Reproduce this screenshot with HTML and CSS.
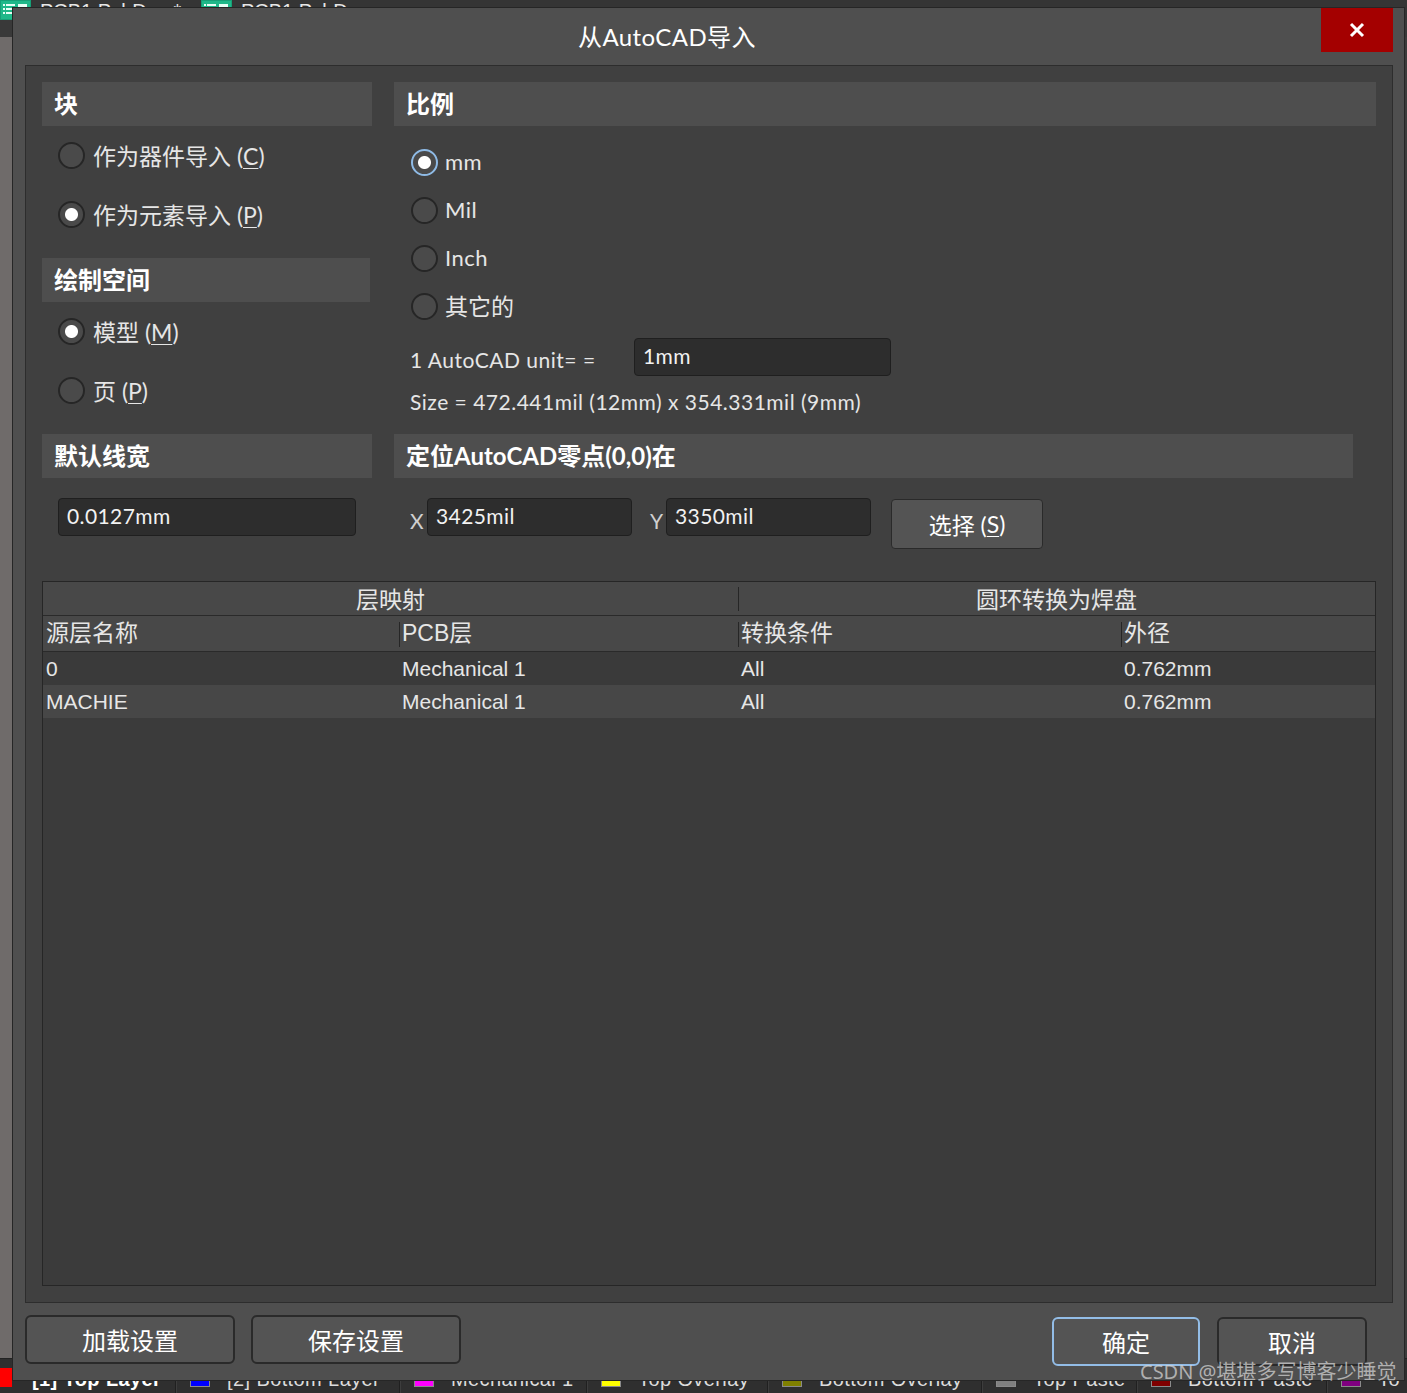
FILE: index.html
```html
<!DOCTYPE html>
<html lang="zh-CN">
<head>
<meta charset="utf-8">
<title>从AutoCAD导入</title>
<link rel="stylesheet" href="styles.css">
</head>
<body>
<div class="app">
  <div class="doc-tabs">
    <div class="doc-tab">
      <svg class="doc-icon" viewBox="0 0 31 20" width="31" height="20"><rect x="0" y="0" width="31" height="20" fill="#16a077"/><rect x="1" y="1" width="29" height="18" fill="#1fb889"/><g fill="#e8fff6"><rect x="3" y="4" width="2" height="2"/><rect x="6" y="4" width="9" height="2"/><rect x="3" y="8" width="2" height="2"/><rect x="6" y="8" width="9" height="2"/><rect x="3" y="12" width="2" height="2"/><rect x="6" y="12" width="9" height="2"/><rect x="18" y="4" width="9" height="10"/></g></svg>
      <span class="doc-name">PCB1.PcbDoc *</span>
    </div>
    <div class="doc-tab">
      <svg class="doc-icon" viewBox="0 0 31 20" width="31" height="20"><rect x="0" y="0" width="31" height="20" fill="#16a077"/><rect x="1" y="1" width="29" height="18" fill="#1fb889"/><g fill="#e8fff6"><rect x="3" y="4" width="2" height="2"/><rect x="6" y="4" width="9" height="2"/><rect x="3" y="8" width="2" height="2"/><rect x="6" y="8" width="9" height="2"/><rect x="3" y="12" width="2" height="2"/><rect x="6" y="12" width="9" height="2"/><rect x="18" y="4" width="9" height="10"/></g></svg>
      <span class="doc-name">PCB1.PcbDoc</span>
    </div>
  </div>
  <div class="toolbar"></div>
  <div class="workspace">
    <div class="side-strip"></div>
    <div class="canvas"></div>
  </div>
  <div class="layer-tabs">
    <div class="layer-tab active"><span class="swatch sw-red"></span><span class="layer-name">[1] Top Layer</span></div>
    <div class="layer-tab"><span class="swatch sw-blue"></span><span class="layer-name">[2] Bottom Layer</span></div>
    <div class="layer-tab"><span class="swatch sw-magenta"></span><span class="layer-name">Mechanical 1</span></div>
    <div class="layer-tab"><span class="swatch sw-yellow"></span><span class="layer-name">Top Overlay</span></div>
    <div class="layer-tab"><span class="swatch sw-olive"></span><span class="layer-name">Bottom Overlay</span></div>
    <div class="layer-tab"><span class="swatch sw-gray"></span><span class="layer-name">Top Paste</span></div>
    <div class="layer-tab"><span class="swatch sw-maroon"></span><span class="layer-name">Bottom Paste</span></div>
    <div class="layer-tab"><span class="swatch sw-purple"></span><span class="layer-name">To</span></div>
  </div>
</div>

<div class="dialog">
  <div class="titlebar">
    <div class="title">从AutoCAD导入</div>
    <div class="close"><svg viewBox="0 0 16 16" width="16" height="16"><path d="M2 2 L14 14 M14 2 L2 14" stroke="#fff" stroke-width="3" fill="none"/></svg></div>
  </div>

  <div class="panel">
    <div class="top-grid">
      <div class="col">
        <div class="section-head">块</div>
        <div class="radio-row left-row"><span class="radio"></span><span class="label">作为器件导入 (<u>C</u>)</span></div>
        <div class="radio-row left-row"><span class="radio on"></span><span class="label">作为元素导入 (<u>P</u>)</span></div>
        <div class="section-head narrow gap-top">绘制空间</div>
        <div class="radio-row left-row"><span class="radio on"></span><span class="label">模型 (<u>M</u>)</span></div>
        <div class="radio-row left-row"><span class="radio"></span><span class="label">页 (<u>P</u>)</span></div>
      </div>
      <div class="col">
        <div class="section-head">比例</div>
        <div class="scale-list">
          <div class="radio-row right-row"><span class="radio on focus"></span><span class="label latin">mm</span></div>
          <div class="radio-row right-row"><span class="radio"></span><span class="label latin">Mil</span></div>
          <div class="radio-row right-row"><span class="radio"></span><span class="label latin">Inch</span></div>
          <div class="radio-row right-row"><span class="radio"></span><span class="label">其它的</span></div>
        </div>
        <div class="unit-row">
          <span class="unit-label">1 AutoCAD unit= =</span>
          <div class="field unit-field">1mm</div>
        </div>
        <div class="size-row">Size = 472.441mil (12mm) x 354.331mil (9mm)</div>
      </div>
    </div>

    <div class="origin-grid">
      <div class="col">
        <div class="section-head">默认线宽</div>
        <div class="field width-field">0.0127mm</div>
      </div>
      <div class="col">
        <div class="section-head origin-head">定位AutoCAD零点(0,0)在</div>
        <div class="xy-row">
          <span class="axis">X</span>
          <div class="field xy-field">3425mil</div>
          <span class="axis axis-y">Y</span>
          <div class="field xy-field">3350mil</div>
          <div class="btn pick-btn">选择 (<u>S</u>)</div>
        </div>
      </div>
    </div>

    <div class="layer-table">
      <div class="group-row">
        <div class="group">层映射</div>
        <div class="group group-2">圆环转换为焊盘</div>
      </div>
      <div class="grid-row head-row">
        <div class="cell">源层名称</div>
        <div class="cell div">PCB层</div>
        <div class="cell div">转换条件</div>
        <div class="cell div">外径</div>
      </div>
      <div class="grid-row data-row dark">
        <div class="cell">0</div>
        <div class="cell">Mechanical 1</div>
        <div class="cell">All</div>
        <div class="cell">0.762mm</div>
      </div>
      <div class="grid-row data-row light">
        <div class="cell">MACHIE</div>
        <div class="cell">Mechanical 1</div>
        <div class="cell">All</div>
        <div class="cell">0.762mm</div>
      </div>
    </div>
  </div>

  <div class="footer">
    <div class="btn foot-btn">加载设置</div>
    <div class="btn foot-btn">保存设置</div>
    <div class="foot-right">
      <div class="btn ok-btn">确定</div>
      <div class="btn cancel-btn">取消</div>
    </div>
  </div>
</div>

<div class="watermark">CSDN @堪堪多写博客少睡觉</div>
</body>
</html>
```

FILE: styles.css
```css
* { box-sizing: border-box; }
html, body { margin: 0; padding: 0; }
body {
  width: 1407px;
  height: 1393px;
  overflow: hidden;
  position: relative;
  background: #2f2f2f;
  font-family: Lato, "Noto Sans CJK SC", sans-serif;
}

/* ---------- application behind the dialog ---------- */
.app { display: flex; flex-direction: column; height: 1393px; }
.doc-tabs { height: 20px; background: #353535; display: flex; overflow: hidden; }
.doc-tab { width: 201px; display: flex; align-items: flex-start; gap: 9px; }
.doc-icon { flex: none; display: block; }
.doc-name { font: 20px/20px "Liberation Sans", sans-serif; color: #e6e6e6; margin-top: 1px; }
.toolbar { height: 17px; background: #393939; }
.workspace { flex: 1; display: flex; background: #6f6b6a; }
.side-strip { width: 12px; background: #6f6b6a; }
.canvas { flex: 1; background: #3c3c3c; }

.layer-tabs {
  height: 35px;
  background: #2f2f2f;
  border-top: 1px solid #232323;
  display: flex;
  overflow: hidden;
}
.layer-tab {
  display: flex;
  align-items: flex-start;
  padding: 8px 0 0 14px;
  border-right: 1px solid #202020;
  box-shadow: 1px 0 0 #3d3d3d;
  flex: none;
  white-space: nowrap;
}
.layer-tab:nth-child(1) { width: 176px; padding-left: 0; }
.layer-tab:nth-child(2) { width: 224px; }
.layer-tab:nth-child(3) { width: 187px; }
.layer-tab:nth-child(4) { width: 181px; }
.layer-tab:nth-child(5) { width: 214px; }
.layer-tab:nth-child(6) { width: 155px; }
.layer-tab:nth-child(7) { width: 190px; }
.layer-tab:nth-child(8) { width: 80px; border-right: 0; box-shadow: none; }
.swatch { width: 20px; height: 19px; margin-top: 1px; border: 1px solid #8a8a8a; flex: none; }
.layer-tab.active .swatch { width: 12px; border: 0; }
.sw-red { background: #ff0000; }
.sw-blue { background: #0000ff; }
.sw-magenta { background: #ff00ff; }
.sw-yellow { background: #ffff00; }
.sw-olive { background: #808000; }
.sw-gray { background: #808080; }
.sw-maroon { background: #800000; }
.sw-purple { background: #800080; }
.layer-name { font: 20px/24px "Liberation Sans", sans-serif; color: #dcdcdc; margin-left: 17px; letter-spacing: 0.4px; }
.layer-tab.active .layer-name { font-weight: bold; color: #fff; margin-left: 20px; }

/* ---------- dialog ---------- */
.dialog {
  position: absolute;
  left: 12px;
  top: 7px;
  width: 1393px;
  height: 1374px;
  background: #4f4f4f;
  border: 1px solid #262626;
  display: flex;
  flex-direction: column;
  color: #e6e6e6;
}
.titlebar { height: 57px; display: flex; align-items: flex-start; flex: none; }
.title { flex: 1; text-align: center; font-size: 24px; line-height: 58px; color: #ffffff; letter-spacing: 0.4px; }
.close {
  width: 72px;
  height: 44px;
  margin-right: 11px;
  background: #a40000;
  display: flex;
  align-items: center;
  justify-content: center;
}
.close svg { display: block; }

.panel {
  height: 1238px;
  flex: none;
  margin: 0 11px 0 12px;
  background: #404040;
  border: 1px solid #2d2d2d;
  padding: 16px;
  display: flex;
  flex-direction: column;
}

.top-grid, .origin-grid {
  display: grid;
  grid-template-columns: 330px 1fr;
  column-gap: 22px;
}
.col { display: flex; flex-direction: column; align-items: flex-start; }

.section-head {
  align-self: stretch;
  height: 44px;
  background: #4e4e4e;
  color: #ffffff;
  font-weight: bold;
  font-size: 24px;
  line-height: 44px;
  padding-left: 12px;
  font-family: Lato, "Noto Sans CJK SC", sans-serif;
}
.section-head.narrow { align-self: flex-start; width: 328px; }
.section-head.gap-top { margin-top: 14px; }
.origin-head { margin-right: 23px; }

.radio-row { display: flex; align-items: center; }
.left-row { height: 59px; padding-left: 16px; gap: 8px; }
.left-row:last-child { margin-bottom: 14px; }
.scale-list { margin-top: 12px; display: flex; flex-direction: column; }
.right-row { height: 48px; padding-left: 17px; gap: 7px; }

.radio {
  width: 27px;
  height: 27px;
  border-radius: 50%;
  border: 2px solid #262626;
  background: #4a4a4a;
  flex: none;
}
.radio.on { background: radial-gradient(circle, #ffffff 0 6px, #4a4a4a 7px); }
.radio.focus { border-color: #8fbbe6; }

.label { font-size: 23px; line-height: 30px; color: #e6e6e6; white-space: nowrap; }
.label.latin { font-size: 22px; letter-spacing: 0.5px; }
u { text-decoration-thickness: 1px; text-underline-offset: 3px; }

.unit-row { margin-top: 8px; height: 38px; display: flex; align-items: center; padding-left: 16px; }
.unit-label { width: 224px; font-size: 21px; color: #e6e6e6; white-space: nowrap; padding-top: 4px; letter-spacing: 0.5px; }
.size-row { margin-top: 8px; height: 36px; line-height: 36px; padding-left: 16px; font-size: 21px; color: #e6e6e6; white-space: nowrap; margin-bottom: 14px; letter-spacing: 0.5px; }

.field {
  height: 38px;
  background: #2d2d2d;
  border: 1px solid #1f1f1f;
  border-radius: 4px;
  color: #f2f2f2;
  font-size: 21px;
  line-height: 34px;
  padding-left: 8px;
  letter-spacing: 0.4px;
}
.unit-field { width: 257px; }
.width-field { width: 298px; margin: 20px 0 0 16px; }

.xy-row { display: flex; align-items: flex-start; margin-top: 20px; padding-left: 16px; }
.axis { font-size: 21px; line-height: 38px; color: #d0d0d0; width: 17px; padding-top: 4px; }
.axis-y { margin-left: 18px; width: 16px; }
.xy-field { width: 205px; }

.btn {
  background: #545454;
  border: 2px solid #2a2a2a;
  border-radius: 6px;
  color: #ffffff;
  display: flex;
  align-items: center;
  justify-content: center;
  white-space: nowrap;
}
.pick-btn { width: 152px; height: 50px; margin: 1px 0 0 20px; font-size: 23px; border-width: 1px; border-radius: 4px; }

/* ---------- table ---------- */
.layer-table {
  margin-top: 32px;
  flex: 1;
  background: #3b3b3b;
  border: 1px solid #262626;
  display: flex;
  flex-direction: column;
}
.group-row {
  height: 34px;
  display: grid;
  grid-template-columns: 695px 1fr;
  background: #484848;
  border-bottom: 1px solid #2a2a2a;
}
.group { text-align: center; font-size: 23px; line-height: 34px; color: #e6e6e6; }
.group-2 { background: linear-gradient(#262626, #262626) left 5px / 1px 24px no-repeat; }

.grid-row { display: grid; grid-template-columns: 356px 339px 383px 1fr; }
.head-row { height: 36px; background: #484848; border-bottom: 1px solid #2a2a2a; }
.head-row .cell { font-size: 23px; line-height: 35px; padding-left: 3px; color: #e6e6e6; font-family: "Liberation Sans", "Noto Sans CJK SC", sans-serif; }
.head-row .cell.div { background: linear-gradient(#262626, #262626) left 6px / 1px 25px no-repeat; }
.data-row { height: 33px; }
.data-row .cell { font: 21px/33px "Liberation Sans", sans-serif; color: #e6e6e6; padding-left: 3px; }
.data-row.dark { background: #3a3a3a; }
.data-row.light { background: #474747; }

/* ---------- footer ---------- */
.footer { flex: 1; display: flex; align-items: flex-start; padding: 12px 37px 0 12px; gap: 16px; }
.foot-btn { width: 210px; height: 49px; font-size: 24px; }
.foot-right { margin-left: auto; margin-top: 2px; display: flex; gap: 17px; }
.ok-btn { width: 148px; height: 49px; font-size: 24px; border-color: #93bde7; }
.cancel-btn { width: 150px; height: 49px; font-size: 24px; }

.watermark {
  position: absolute;
  left: 1140px;
  top: 1360px;
  font-family: "Noto Sans", "Noto Sans CJK SC", sans-serif;
  font-size: 20px;
  line-height: 24px;
  color: rgba(215, 215, 215, 0.72);
  white-space: nowrap;
}
```
